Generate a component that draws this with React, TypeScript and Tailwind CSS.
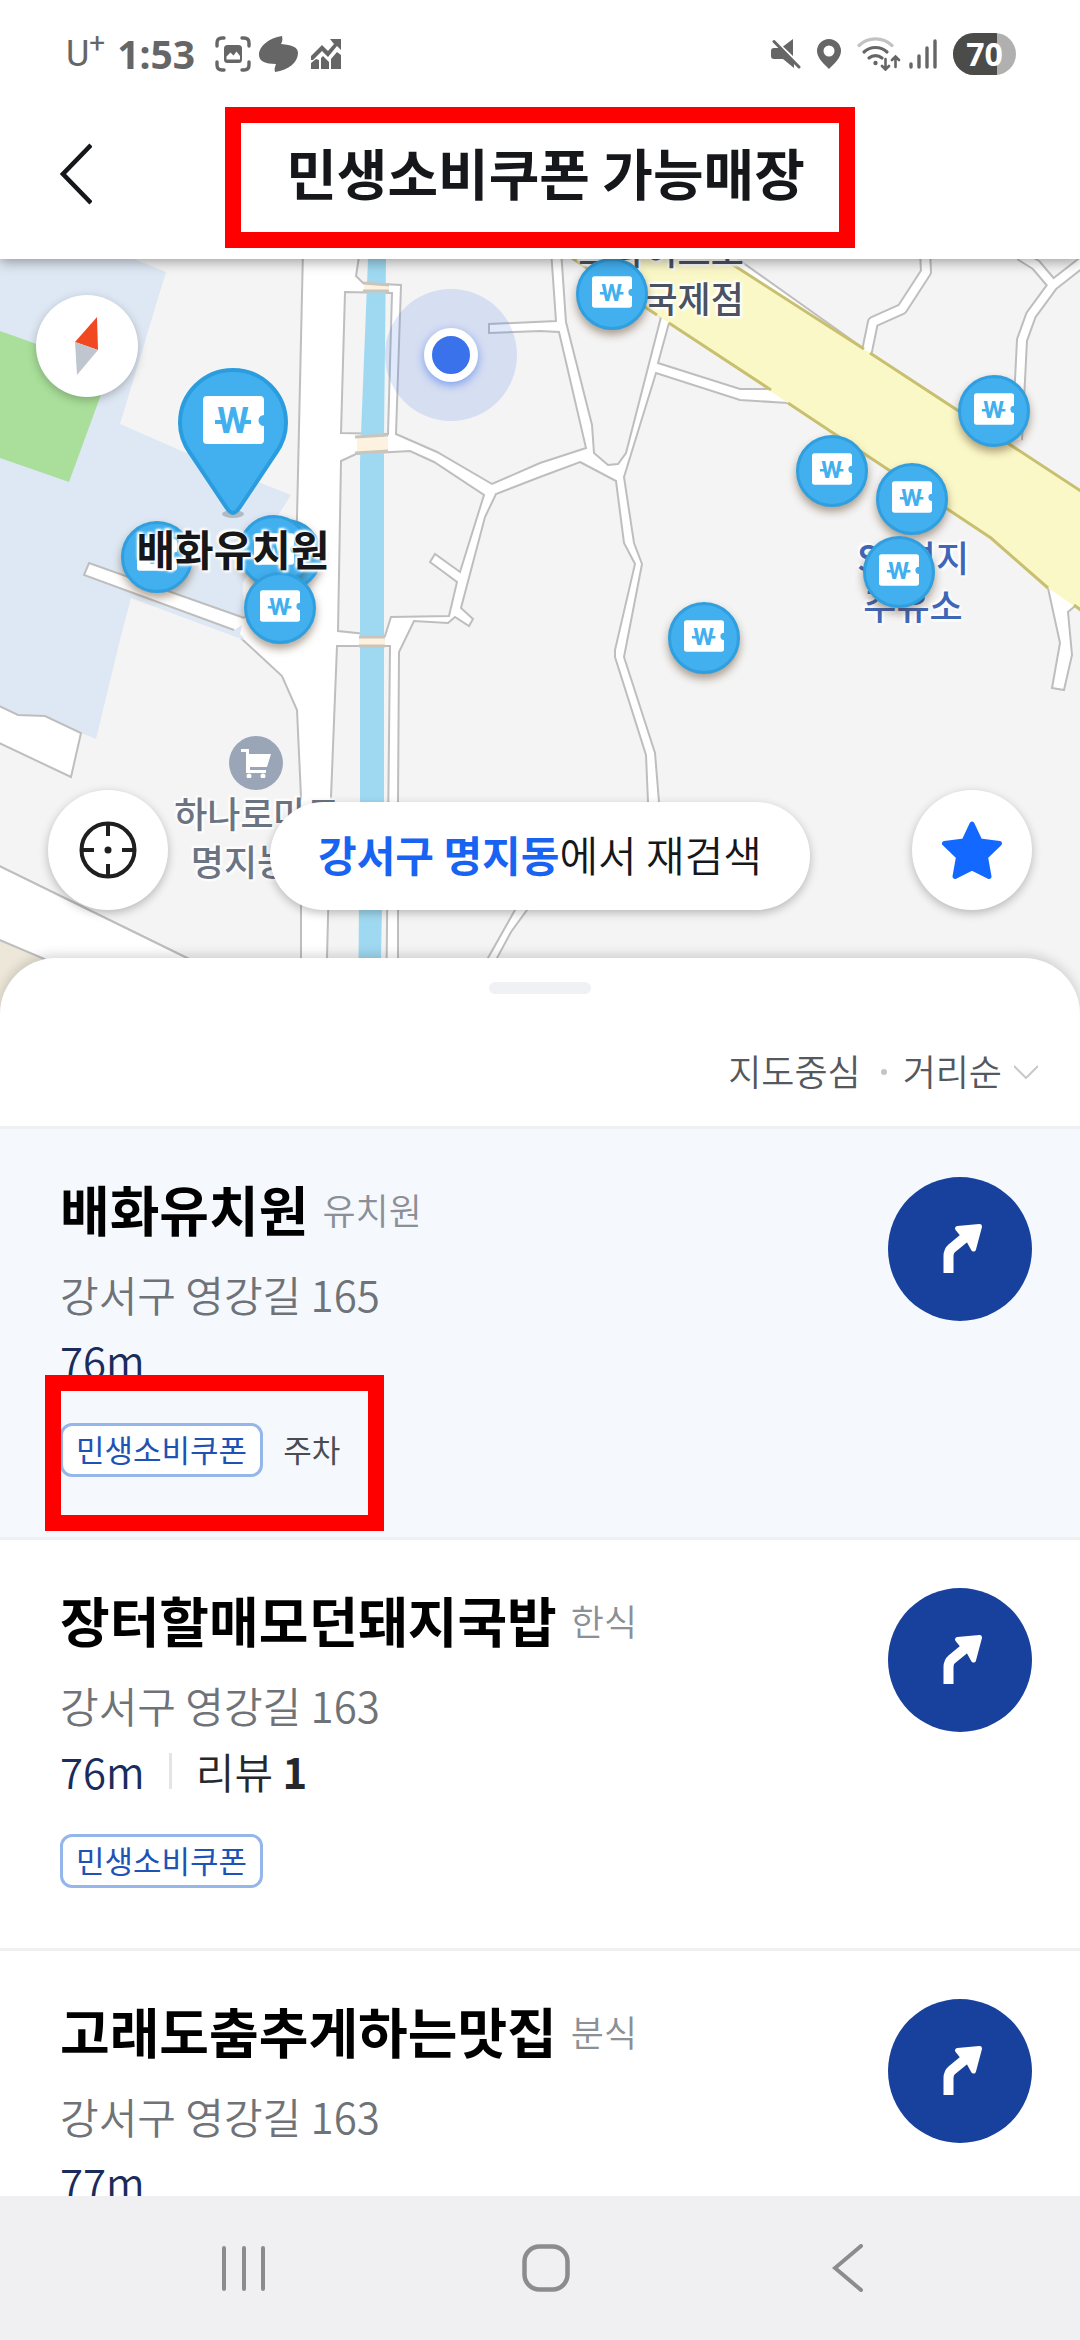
import { useState, type CSSProperties, type ReactNode } from 'react';

// ─── Data ──────────────────────────────────────────────────────────────────────

interface Store {
  id: number;
  name: string;
  category: string;
  address: string;
  distance: string;
  reviews?: number;
  tags: string[];
  highlighted?: boolean;
}

const STORES: Store[] = [
  {
    id: 1,
    name: '배화유치원',
    category: '유치원',
    address: '강서구 영강길 165',
    distance: '76m',
    tags: ['주차'],
    highlighted: true,
  },
  {
    id: 2,
    name: '장터할매모던돼지국밥',
    category: '한식',
    address: '강서구 영강길 163',
    distance: '76m',
    reviews: 1,
    tags: [],
  },
  {
    id: 3,
    name: '고래도춤추게하는맛집',
    category: '분식',
    address: '강서구 영강길 163',
    distance: '77m',
    tags: [],
  },
];

// Map canvas units, origin at the top left of the map
const MAP_W = 1080;
const MAP_H = 755;

const PINS = [
  { x: 157, y: 298 },
  { x: 286, y: 296 },
  { x: 274, y: 292 },
  { x: 280, y: 349 },
  { x: 612, y: 35 },
  { x: 832, y: 212 },
  { x: 912, y: 240 },
  { x: 899, y: 313 },
  { x: 994, y: 152 },
  { x: 704, y: 379 },
];

const at = (x: number, y: number): CSSProperties => ({
  left: `${(x / MAP_W) * 100}%`,
  top: `${(y / MAP_H) * 100}%`,
});

// ─── Status bar ────────────────────────────────────────────────────────────────

function StatusBar() {
  return (
    <div className="flex h-[107px] items-center justify-between pl-[66px] pr-16 font-['Noto_Sans',sans-serif] text-[#666]">
      <div className="flex items-center">
        <span className="font-[Roboto,sans-serif] text-[36px] leading-none">
          U<sup className="text-[28px]">+</sup>
        </span>
        <span className="ml-3 text-[39px] font-bold leading-none">1:53</span>
        <svg className="ml-5 h-9 w-9" viewBox="0 0 36 36" fill="none" stroke="currentColor" strokeWidth="3.4" strokeLinecap="round">
          <path d="M2 10V7q0-5 5-5h2M27 2h2q5 0 5 5v3M34 26v3q0 5-5 5h-2M9 34H7q-5 0-5-5v-3" />
          <rect x="9" y="9" width="18" height="18" rx="3.5" fill="currentColor" stroke="none" />
          <path d="M11.500 23.500v-3l4-4 3 3 3-4 3.500 4.500v3.500z" fill="#fff" stroke="none" />
        </svg>
        <svg className="ml-2 h-9 w-10" viewBox="0 0 40 36" fill="currentColor">
          <path d="M23 0C10 2 0 10 0 19c0 6 6 9 17 9-1 3-2 5-1 8C30 34 39 26 39 17c0-6-6-8-17-9 1-2 2-4 1-8z" />
        </svg>
        <svg className="ml-3 h-[30px] w-[30px]" viewBox="0 0 30 30" fill="currentColor">
          <path d="M19 0h11v11l-4-4-9 11-6-6-9 9H0v-4L11 6l6 6 6-7z" />
          <path d="M0 24l5-4 3 1v9H0zM10 19l2-2 6 6v7h-8zM20 20l6-7 4 3v14H20z" />
        </svg>
      </div>

      <div className="flex items-center">
        <svg className="h-[30px] w-[30px]" viewBox="0 0 30 30" fill="currentColor">
          <path d="M0 12q0-3 3-3h5l15 15v5L12 20H3q-3 0-3-3zM12 7.500 22 0v17z" />
          <path d="M3 2.500 28 28" stroke="currentColor" strokeWidth="3" strokeLinecap="round" />
        </svg>
        <svg className="ml-4 h-[30px] w-6" viewBox="0 0 24 30" fill="currentColor" fillRule="evenodd">
          <path d="M12 0a12 12 0 0 1 12 12c0 7-7 13-12 18C7 25 0 19 0 12A12 12 0 0 1 12 0zm0 6.500a5.500 5.500 0 1 0 0 11 5.500 5.500 0 0 0 0-11z" />
        </svg>
        <svg className="ml-4 h-[34px] w-11" viewBox="0 0 44 34" fill="none" stroke="currentColor" strokeWidth="3.200" strokeLinecap="round">
          <path d="M2 8.500a24 24 0 0 1 33 0" stroke="#c2c2c2" />
          <path d="M7 15a17 17 0 0 1 23 0M12 21a10 10 0 0 1 13 0" />
          <circle cx="18.500" cy="26" r="2.200" fill="currentColor" stroke="none" />
          <path d="M28.500 22v10M25 29l3.500 3.500L32 29M38.500 30V20M35 23l3.500-3.500L42 23" strokeWidth="2.600" />
        </svg>
        <svg className="ml-2 h-[30px] w-7" viewBox="0 0 28 30" stroke="currentColor" strokeWidth="3.400" strokeLinecap="round">
          <path d="M2 28v-3M10 28V17M18 28V9M26 28V2" />
        </svg>
        <div className="relative ml-4 flex h-[42px] w-[63px] items-center justify-center overflow-hidden rounded-full bg-[#b0b0b0]">
          <div className="absolute inset-y-0 left-0 w-[70%] bg-[#4b4b49]" />
          <span className="relative text-[32px] font-bold leading-none text-white">70</span>
        </div>
      </div>
    </div>
  );
}

// ─── Header ────────────────────────────────────────────────────────────────────

function Header() {
  return (
    <header className="relative z-20 bg-white shadow-[0_3px_12px_rgba(0,0,0,0.35)]">
      <StatusBar />
      <div className="relative flex h-[152px] items-start justify-center">
        <button className="absolute left-12 top-6 p-3" aria-label="뒤로">
          <svg className="h-[62px] w-8" viewBox="0 0 32 62" fill="none" stroke="#15171a" strokeWidth="4.500">
            <path d="M31 2 3 31l28 29" />
          </svg>
        </button>
        <h1 className="flex h-[141px] items-center justify-center border-16 border-[#ff0000] pb-3 pl-[45px] pr-[34px] text-[55px] font-bold leading-none text-[#15171a]">
          민생소비쿠폰 가능매장
        </h1>
      </div>
    </header>
  );
}

// ─── Map ───────────────────────────────────────────────────────────────────────

function MapCanvas() {
  return (
    <svg
      className="absolute inset-0 h-full w-full"
      viewBox="0 259 1080 755"
      preserveAspectRatio="none"
      aria-hidden="true"
    >
      <rect y="259" width="1080" height="755" fill="#fff" />

      {/* Blocks */}
      <g fill="#f4f4f4" stroke="#bebebe" strokeWidth="2">
        <path d="M-5 250H303L297 517 296 570 244 618 234 630 243 640 282 676 297 710 301 797V1020H300L187 958-5 864z" />
        <path d="M345 292 392 293 388 434 341 433z" />
        <path d="M341 461 356 454 410 451 434 462 484 495 460 572 435 554 430 562 457 582 449 616 391 617 385 636 338 631z" />
        <path d="M360 250 356 276 363 283 401 285 396 434 437 452 492 484 540 463 586 448 559 332 540 331 489 333V324L556 321 551 250z" />
        <path d="M561 250 566 322 592 425 594 453 608 465 618 464 626 453 661 317 640 300 572 250z" />
        <path d="M669 323 658 363 740 389 771 389z" />
        <path d="M656 373 624 477 634 543 642 564 624 657 655 753 659 802 527 910 511 932 497 958 480 1020H1085V600L788 403 740 400z" />
        <path d="M580 462 616 481 624 543 635 564 615 650V657L646 755 648 802 515 910 488 958 470 1020H398V802L399 652 414 621 448 623 455 617 469 626 473 619 461 608 485 517 496 494 540 477z" />
        <path d="M337 646 390 646 386 1020H326L327 958 331 797z" />
        <path d="M725 250H1085V495L1013 447 870 353z" />
      </g>

      {/* School grounds and green */}
      <path d="M0 259H134L166 272 120 424 184 452 291 495 277 517 243 583 244 640 131 598 120 640 96 739 81 733 45 716 18 715 0 706z" fill="#dee8f4" />
      <path d="M0 331 110 370 69 482 0 458z" fill="#a9df9a" />

      {/* White lanes cut into the west block */}
      <g fill="#fff" stroke="#bebebe" strokeWidth="2">
        <path d="M250 620 89 563 84 575 234 630" />
        <path d="M-5 704 18 715 45 716 81 733 71 777-5 741z" />
        <path d="M-5 864 187 958 300 1014H-5z" />
        <path d="M-5 938 42 958 160 1014H-5z" fill="#ece7d8" />
      </g>
      <path d="M243 620 298 560V700L282 674 240 634z" fill="#fff" />

      {/* Canal */}
      <path d="M368 259H386L384 434V797L380 1014H358L360 797V461L361 434z" fill="#9fd9f1" />
      <path d="M364 284H389V291H364zM357 437H388V452H357zM359 637H385V646H359z" fill="#fdf2e0" />
      <path d="M363 283 389 285M363 291H389M355 437 388 435M355 453 388 451M359 637H385M359 646H385" stroke="#c9c5bb" strokeWidth="3" />

      {/* Lanes in the north east block */}
      <g fill="none" strokeLinejoin="round">
        <path d="M925 250 926 272 902 309 873 322 866 356M1090 256 1053 285 1031 315 1022 340 1017 440M1020 255 1036 265 1053 285" stroke="#bebebe" strokeWidth="12" />
        <path d="M925 250 926 272 902 309 873 322 866 356M1090 256 1053 285 1031 315 1022 340 1017 440M1020 255 1036 265 1053 285" stroke="#fff" strokeWidth="8" />
      </g>
      <path d="M1048 588 1060 643 1052 688 1064 690 1072 655 1068 612 1082 600" fill="#fff" stroke="#bebebe" strokeWidth="2" />

      {/* Main road */}
      <path d="M560 250 669 323 788 403 991 538 1048 588 1090 617V497L1013 447 958 410 870 353 741 270 710 250z" fill="#fbf8c8" />
      <path d="M560 250 657 315M669 323 771 390M788 403 991 538 1048 588M1074 605 1090 617M1090 497 870 353M864 349 710 250" fill="none" stroke="#c9c06f" strokeWidth="3" />

      {/* Current position */}
      <circle cx="451" cy="355" r="66" fill="#3c6ee8" fillOpacity="0.16" />
    </svg>
  );
}

function CouponGlyph({ className }: { className: string }) {
  return (
    <svg className={className} viewBox="0 0 61 48" aria-hidden="true">
      <path d="M4 0H57Q61 0 61 4V19A5.500 5.500 0 0 0 61 30V44Q61 48 57 48H4Q0 48 0 44V4Q0 0 4 0z" fill="#fff" />
      <path d="M12 26H20M41 26H48" stroke="#42afee" strokeWidth="4" />
      <text x="30" y="37" textAnchor="middle" fill="#42afee" fontFamily="Roboto, sans-serif" fontWeight="700" fontSize="36">
        W
      </text>
    </svg>
  );
}

function StorePin({ x, y }: { x: number; y: number }) {
  return (
    <button
      className="absolute flex h-[72px] w-[72px] -translate-x-1/2 -translate-y-1/2 items-center justify-center rounded-full border-[3px] border-[#2f9fe0] bg-[#42afee] pb-1 shadow-[0_5px_8px_rgba(80,50,20,0.45)]"
      style={at(x, y)}
      aria-label="매장"
    >
      <CouponGlyph className="h-8 w-10" />
    </button>
  );
}

function MapLabel({ x, y, className, children }: { x: number; y: number; className: string; children: ReactNode }) {
  return (
    <div
      className={`absolute -translate-x-1/2 -translate-y-1/2 whitespace-nowrap text-center [text-shadow:0_0_4px_#fff,0_0_4px_#fff,2px_2px_2px_#fff,-2px_-2px_2px_#fff] ${className}`}
      style={at(x, y)}
    >
      {children}
    </div>
  );
}

function StoreMap() {
  return (
    <section className="relative aspect-[1080/755] w-full shrink-0 overflow-hidden">
      <MapCanvas />

      {/* Place names */}
      <MapLabel x={661} y={14} className="text-[36px] font-medium leading-[48px] text-[#4b5360]">
        <div>트라이스토</div>
        <div className="text-right">국제점</div>
      </MapLabel>
      <MapLabel x={913} y={321} className="text-[36px] font-medium leading-[48px] text-[#3f67b8]">
        SK명지
        <br />
        주유소
      </MapLabel>
      <MapLabel x={257} y={577} className="text-[36px] font-medium leading-[48px] text-[#6b7482]">
        하나로마트
        <br />
        명지농협
      </MapLabel>
      <div
        className="absolute flex h-[54px] w-[54px] -translate-x-1/2 -translate-y-1/2 items-center justify-center rounded-full bg-[#9aa5b8]"
        style={at(256, 504)}
      >
        <svg className="h-[30px] w-[30px]" viewBox="0 0 30 30" fill="#fff">
          <path d="M0 1H8V6H30L26 19H9V22H25V25H5V4H0z" />
          <circle cx="8" cy="28" r="2.500" />
          <circle cx="22" cy="28" r="2.500" />
        </svg>
      </div>

      {/* Pins */}
      {PINS.map(pin => (
        <StorePin key={`${pin.x}-${pin.y}`} {...pin} />
      ))}
      <button className="absolute -translate-x-1/2" style={at(233, 108)} aria-label="배화유치원 위치">
        <svg className="h-[152px] w-28" viewBox="0 0 112 152" aria-hidden="true">
          <ellipse cx="56" cy="147" rx="11" ry="4" fill="#000" fillOpacity="0.2" />
          <path
            d="M56 146C53 146 51 143 49 140L13 86C6 76 3 66 3 56A53 53 0 0 1 109 56C109 66 106 76 99 86L63 140C61 143 59 146 56 146z"
            fill="#42afee"
            stroke="#2b9ddf"
            strokeWidth="4"
          />
        </svg>
        <CouponGlyph className="absolute left-[26px] top-[29px] h-12 w-[61px]" />
      </button>
      <MapLabel x={233} y={289} className="text-[42px] font-bold leading-none text-[#15171a]">
        배화유치원
      </MapLabel>

      <span
        className="absolute h-[54px] w-[54px] -translate-x-1/2 -translate-y-1/2 rounded-full border-8 border-white bg-[#3a72ec] shadow-[0_3px_10px_rgba(58,114,236,0.6)]"
        style={at(451, 96)}
      />

      {/* Controls */}
      <button className="absolute left-9 top-9 flex h-[102px] w-[102px] items-center justify-center rounded-full bg-white shadow-[0_3px_10px_rgba(0,0,0,0.25)]" aria-label="나침반">
        <svg className="h-[58px] w-6" viewBox="0 0 24 58">
          <path d="M22 0 0 25 23 33z" fill="#f24822" />
          <path d="M0 25 23 33 2 58z" fill="#bfc6d0" />
        </svg>
      </button>

      <div className="absolute inset-x-12 bottom-[104px] flex items-end justify-between">
        <button className="flex h-[120px] w-[120px] items-center justify-center rounded-full bg-white shadow-[0_3px_10px_rgba(0,0,0,0.25)]" aria-label="내 위치">
          <svg className="h-[58px] w-[58px]" viewBox="0 0 58 58" fill="none" stroke="#1f1f1f" strokeWidth="4">
            <circle cx="29" cy="29" r="26.500" />
            <path d="M29 2v13M29 43v13M2 29h13M43 29h13" />
            <circle cx="29" cy="29" r="3.500" fill="#1f1f1f" stroke="none" />
          </svg>
        </button>
        <button className="flex h-[108px] items-center rounded-full bg-white px-12 pb-1 text-[42px] leading-none text-[#15171a] shadow-[0_3px_10px_rgba(0,0,0,0.25)]">
          <span className="font-bold text-[#1863f2]">강서구 명지동</span>
          <span className="font-[350]">에서 재검색</span>
        </button>
        <button className="flex h-[120px] w-[120px] items-center justify-center rounded-full bg-white shadow-[0_3px_10px_rgba(0,0,0,0.25)]" aria-label="즐겨찾기">
          <svg className="h-[60px] w-[60px]" viewBox="0 0 60 60" fill="#1268ff" stroke="#1268ff" strokeWidth="5" strokeLinejoin="round">
            <path d="M30 4 38 21 57.500 23.500 43.500 37 47 56.500 30 48 13 56.500 16.500 37 2.500 23.500 22 21z" />
          </svg>
        </button>
      </div>
    </section>
  );
}

// ─── Store list ────────────────────────────────────────────────────────────────

function SortBar({ sort, onToggle }: { sort: string; onToggle: () => void }) {
  return (
    <div className="box-content flex h-[108px] shrink-0 items-center justify-end border-b-[3px] border-[#eff0f2] pr-[42px] text-[36px] leading-none text-[#55585c]">
      <button className="pb-1 font-[350]">지도중심</button>
      <span className="ml-5 mr-4 h-1.5 w-1.5 rounded-full bg-[#c4c4c6]" />
      <button className="flex items-center gap-3 font-[350]" onClick={onToggle}>
        <span className="pb-1">{sort}</span>
        <svg className="h-[14px] w-6" viewBox="0 0 24 14" fill="none" stroke="#c6c8cb" strokeWidth="2">
          <path d="M0 1 12 13 24 1" />
        </svg>
      </button>
    </div>
  );
}

function StoreItem({ store }: { store: Store }) {
  return (
    <li
      className={`relative flex shrink-0 items-start justify-between border-b-[3px] border-[#eff0f2] pb-[60px] pl-[60px] pr-12 ${
        store.highlighted ? 'bg-[#f5f9fe]' : 'bg-white'
      }`}
    >
      <div className="pt-10">
        <div className="flex items-center gap-3.5 leading-[80px]">
          <h2 className="text-[54px] font-bold text-black">{store.name}</h2>
          <span className="text-[36px] font-[350] text-[#8b8f96]">{store.category}</span>
        </div>
        <p className="mt-3 text-[42px] font-[350] leading-[66px] text-[#6f7378]">{store.address}</p>
        <div className="flex items-center text-[42px] font-[350] leading-[66px] text-[#1a2c5c]">
          {store.distance}
          {store.reviews && (
            <>
              <span className="mx-6 h-9 w-[3px] bg-[#e3e4e6]" />
              <span className="text-[#26282b]">
                리뷰 <b className="font-bold">{store.reviews}</b>
              </span>
            </>
          )}
        </div>
        <div className="mt-[30px] flex items-center gap-5 text-[31px]">
          <span className="flex h-[54px] items-center rounded-xl border-[3px] border-[#94b6eb] bg-white px-[13px] pb-1 leading-none text-[#1e52b4]">
            민생소비쿠폰
          </span>
          {store.tags.map(tag => (
            <span key={tag} className="pb-1 leading-none text-[#4b4c50]">
              {tag}
            </span>
          ))}
        </div>
      </div>

      <button className="mt-12 h-36 w-36 shrink-0 rounded-full bg-[#17419d]" aria-label={`${store.name} 길찾기`}>
        <svg className="h-36 w-36" viewBox="0 0 144 144">
          <path d="M60.500 96V79Q60.500 74 64 71L80 58" fill="none" stroke="#fff" strokeWidth="10" />
          <path d="M69.500 51.500 91.500 49.500 85.500 72 80 62 74 57z" fill="#fff" stroke="#fff" strokeWidth="5" strokeLinejoin="round" />
        </svg>
      </button>

      {/* Marker box around the coupon tags */}
      {store.highlighted && (
        <div className="pointer-events-none absolute bottom-1.5 left-[45px] h-[156px] w-[339px] border-16 border-[#ff0000]" />
      )}
    </li>
  );
}

// ─── System navigation ─────────────────────────────────────────────────────────

function SystemNav() {
  const button = 'flex h-24 w-24 items-center justify-center';
  return (
    <nav className="relative z-10 flex h-36 shrink-0 items-center justify-center gap-[206px] bg-[#f0f0f2] pl-3 text-[#8c8c8e]">
      <button className={button} aria-label="최근 앱">
        <svg className="h-12 w-12" viewBox="0 0 48 48" stroke="currentColor" strokeWidth="4" strokeLinecap="round">
          <path d="M4 4v41M24 4v41M43 4v41" />
        </svg>
      </button>
      <button className={button} aria-label="홈">
        <svg className="h-12 w-12" viewBox="0 0 48 48" fill="none" stroke="currentColor" strokeWidth="4.500">
          <rect x="2.500" y="2.500" width="43" height="43" rx="15" />
        </svg>
      </button>
      <button className={button} aria-label="뒤로 가기">
        <svg className="h-12 w-8" viewBox="0 0 32 48" fill="none" stroke="currentColor" strokeWidth="4" strokeLinecap="round">
          <path d="M29 2 3 24l26 22" />
        </svg>
      </button>
    </nav>
  );
}

// ─── Page ──────────────────────────────────────────────────────────────────────

export default function App() {
  const [sort, setSort] = useState('거리순');

  return (
    <div className="flex h-screen flex-col overflow-hidden bg-white font-['Noto_Sans_CJK_KR',sans-serif]">
      <Header />
      <StoreMap />

      <main className="relative -mt-14 flex min-h-0 flex-1 flex-col overflow-hidden rounded-t-[56px] bg-white pt-6 shadow-[0_-3px_12px_rgba(0,0,0,0.16)]">
        <div className="mx-auto mb-6 h-3 w-[102px] shrink-0 rounded-full bg-[#eff1f5]" />
        <SortBar sort={sort} onToggle={() => setSort(sort === '거리순' ? '인기순' : '거리순')} />
        <ul className="flex flex-col">
          {STORES.map(store => (
            <StoreItem key={store.id} store={store} />
          ))}
        </ul>
      </main>

      <SystemNav />
    </div>
  );
}
